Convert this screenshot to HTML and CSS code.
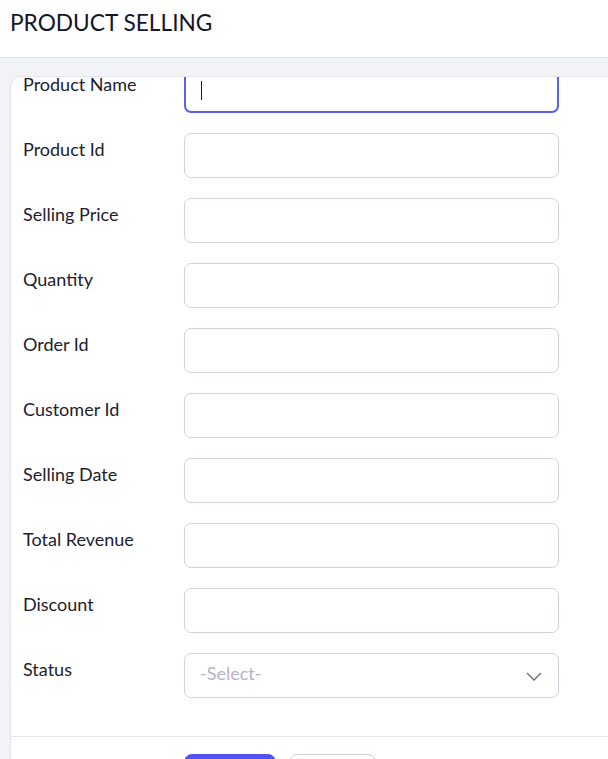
FILE: index.html
```html
<!DOCTYPE html>
<html lang="en">
<head>
<meta charset="utf-8">
<title>Product Selling</title>
<link rel="stylesheet" href="styles.css">
</head>
<body>
<header class="page-header">
  <h1 class="page-title">PRODUCT SELLING</h1>
</header>
<main class="page-body">
  <section class="card">
    <form class="form">
      <div class="row">
        <label class="label">Product Name</label>
        <div class="field field--focused"><input class="input" type="text"><span class="caret"></span></div>
      </div>
      <div class="row">
        <label class="label">Product Id</label>
        <div class="field"><input class="input" type="text"></div>
      </div>
      <div class="row">
        <label class="label">Selling Price</label>
        <div class="field"><input class="input" type="text"></div>
      </div>
      <div class="row">
        <label class="label">Quantity</label>
        <div class="field"><input class="input" type="text"></div>
      </div>
      <div class="row">
        <label class="label">Order Id</label>
        <div class="field"><input class="input" type="text"></div>
      </div>
      <div class="row">
        <label class="label">Customer Id</label>
        <div class="field"><input class="input" type="text"></div>
      </div>
      <div class="row">
        <label class="label">Selling Date</label>
        <div class="field"><input class="input" type="text"></div>
      </div>
      <div class="row">
        <label class="label">Total Revenue</label>
        <div class="field"><input class="input" type="text"></div>
      </div>
      <div class="row">
        <label class="label">Discount</label>
        <div class="field"><input class="input" type="text"></div>
      </div>
      <div class="row">
        <label class="label">Status</label>
        <div class="field select">
          <span class="placeholder">-Select-</span>
          <svg class="chevron" width="16" height="9" viewBox="0 0 16 9"><path d="M1 1 L8 8 L15 1" fill="none" stroke="#6a6980" stroke-width="1.3"/></svg>
        </div>
      </div>
    </form>
    <div class="footer">
      <button class="btn btn--primary" type="button">Save</button>
      <button class="btn btn--ghost" type="button">Cancel</button>
    </div>
  </section>
</main>
</body>
</html>
```
FILE: styles.css
```css
* { box-sizing: border-box; }
html, body { margin: 0; padding: 0; }
body {
  font-family: Lato, "Noto Sans", sans-serif;
  color: #1d1d2c;
  background: #f2f3f7;
  overflow: hidden;
  height: 759px;
}
.page-header {
  background: #fff;
  height: 58px;
  border-bottom: 1px solid #e2e3ea;
  padding: 9px 10px 0;
}
.page-title {
  margin: 0;
  font-size: 22.7px;
  font-weight: 400;
  line-height: 28px;
  color: #14142a;
}
.page-body {
  padding: 18px 0 0 10px;
}
.card {
  background: #fff;
  border-top: 1px solid #e4e5ec;
  border-left: 1px solid #e4e5ec;
  border-top-left-radius: 12px;
  overflow: hidden;
}
.form {
  margin-top: -9px;
  padding: 0 0 18px 12px;
}
.row {
  display: flex;
  align-items: flex-start;
  height: 65px;
}
.label {
  width: 161px;
  padding-top: 9px;
  font-size: 18px;
  line-height: 14px;
  color: #1d1d2c;
}
.field {
  position: relative;
  width: 375px;
  height: 45px;
  border: 1px solid #d3d1e0;
  border-radius: 7px;
  background: #fff;
}
.field--focused {
  border: 2px solid #5b5ff2;
}
.input {
  width: 100%;
  height: 100%;
  border: 0;
  outline: none;
  background: transparent;
  font: inherit;
  padding: 0 15px;
}
.caret {
  position: absolute;
  left: 15px;
  top: 11px;
  width: 1px;
  height: 19px;
  background: #14142a;
}
.select {
  display: flex;
  align-items: center;
  justify-content: space-between;
  padding: 0 16px 0 15px;
}
.placeholder {
  font-size: 18px;
  color: #b5b3c7;
  margin-top: -6px;
}
.chevron { margin-top: 2px; }
.footer {
  border-top: 1px solid #e6e4ef;
  padding: 17px 0 0 173px;
  display: flex;
  gap: 13px;
}
.btn {
  height: 38px;
  border-radius: 8px;
  font: inherit;
  font-size: 16px;
}
.btn--primary {
  width: 92px;
  background: #4f52f5;
  border: 1px solid #4f52f5;
  color: #fff;
}
.btn--ghost {
  width: 87px;
  background: #fff;
  border: 1px solid #cfcce0;
  color: #1d1d2c;
}
```
